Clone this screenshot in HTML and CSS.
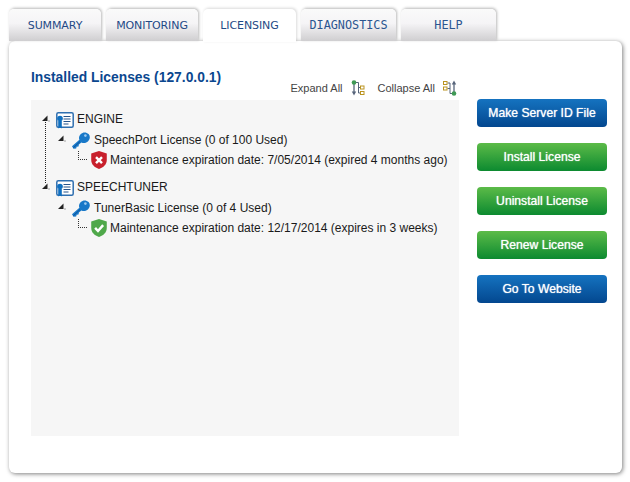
FILE: index.html
```html
<!DOCTYPE html>
<html lang="en">
<head>
<meta charset="utf-8">
<title>Licensing</title>
<link rel="stylesheet" href="styles.css">
</head>
<body>
<svg class="defs" width="0" height="0" aria-hidden="true">
  <defs>
    <symbol id="cert" viewBox="0 0 18 18">
      <rect x=".8" y=".8" width="16.400" height="14.400" rx="1.500" fill="#fff" stroke="#2f6fb0" stroke-width="1.500"/>
      <path d="M7.500 4.500h7M7.500 7h7M7.500 9.500h7M7.500 12h5" stroke="#26548c" stroke-width="1.200" fill="none"/>
      <circle cx="4" cy="6.500" r="2.800" fill="#0f6fc0"/>
      <path d="M2.200 9h3.600v7.500l-1.800-1.300-1.800 1.300z" fill="#0f6fc0"/>
    </symbol>
    <symbol id="key" viewBox="0 0 18 18">
      <path d="M0 15.300l1.500 2.500 2.700-.2.400-1.900 1.900-.2.400-1.900 2.500-2.200c2.200 1 5 .6 6.700-1.200 2.200-2.200 2.200-5.300.5-7.200C14.200 .8 10.800 1 8.800 3 7 4.800 6.600 7.100 7.400 8.800z" fill="#1878c8"/>
      <path d="M1.300 16.800L8 10.500" stroke="#0c4f94" stroke-width=".9"/>
      <circle cx="13.400" cy="4.600" r="1.300" fill="#9ccaf0"/>
    </symbol>
    <symbol id="tree-node" viewBox="0 0 8 8">
      <path d="M5.500 .5v5.500H0z" fill="#222"/>
      <path d="M6.500 5.500h1v1h-1z" fill="#555"/>
    </symbol>
    <symbol id="expand" viewBox="0 0 14 16">
      <path d="M3 4v9" stroke="#56647a" stroke-width="1.300" fill="none"/>
      <path d="M.8 11.500L3 15.500l2.200-4z" fill="#56647a"/>
      <path d="M5 2.500h2.500v10.500h2M7.500 7.500h2" stroke="#56647a" stroke-width="1" fill="none"/>
      <circle cx="3" cy="2.500" r="2.300" fill="#3f9a55"/>
      <rect x="9.500" y="6" width="3.500" height="3" fill="#fff" stroke="#bb9420"/>
      <rect x="9.500" y="11.500" width="3.500" height="3" fill="#fff" stroke="#bb9420"/>
    </symbol>
    <symbol id="collapse" viewBox="0 0 14 16">
      <path d="M11 3v9" stroke="#56647a" stroke-width="1.300" fill="none"/>
      <path d="M8.800 4.500L11 .5l2.200 4z" fill="#56647a"/>
      <path d="M4.500 3h2.500v10.500h2M4.500 8.500H7" stroke="#56647a" stroke-width="1" fill="none"/>
      <circle cx="11" cy="13.500" r="2.300" fill="#3f9a55"/>
      <rect x=".5" y="1.500" width="3.500" height="3" fill="#fff" stroke="#bb9420"/>
      <rect x=".5" y="7" width="3.500" height="3" fill="#fff" stroke="#bb9420"/>
    </symbol>
  </defs>
</svg>
<div class="app">
  <nav class="tabs">
    <a class="tab">SUMMARY</a>
    <a class="tab">MONITORING</a>
    <a class="tab active">LICENSING</a>
    <a class="tab mono tab-wide">DIAGNOSTICS</a>
    <a class="tab mono tab-wide">HELP</a>
  </nav>
  <main class="card">
    <section class="licenses">
      <header class="licenses-head">
        <h1>Installed Licenses (127.0.0.1)</h1>
        <div class="tree-actions">
          <span class="action">Expand All <svg class="action-icon"><use href="#expand"/></svg></span>
          <span class="action">Collapse All <svg class="action-icon"><use href="#collapse"/></svg></span>
        </div>
      </header>
      <div class="tree">
        <div class="branch">
          <div class="row level-0"><svg class="twist"><use href="#tree-node"/></svg><svg class="icon cert"><use href="#cert"/></svg><span>ENGINE</span></div>
          <div class="row level-1"><svg class="twist"><use href="#tree-node"/></svg><svg class="icon"><use href="#key"/></svg><span>SpeechPort License (0 of 100 Used)</span></div>
          <div class="row level-2"><span class="elbow"></span>
            <svg class="shield" viewBox="2 1 14 16.200"><path d="M9 1l7 2.200v6c0 4-3 6.800-7 8-4-1.200-7-4-7-8v-6z" fill="#c8202c"/><path d="M6.300 6.500l5.400 5.400M11.700 6.500l-5.400 5.400" stroke="#fff" stroke-width="2.200"/></svg>
            <span>Maintenance expiration date: 7/05/2014 (expired 4 months ago)</span></div>
        </div>
        <div class="branch">
          <div class="row level-0"><svg class="twist"><use href="#tree-node"/></svg><svg class="icon cert"><use href="#cert"/></svg><span>SPEECHTUNER</span></div>
          <div class="row level-1"><svg class="twist"><use href="#tree-node"/></svg><svg class="icon"><use href="#key"/></svg><span>TunerBasic License (0 of 4 Used)</span></div>
          <div class="row level-2"><span class="elbow"></span>
            <svg class="shield" viewBox="2 1 14 16.200"><path d="M9 1l7 2.200v6c0 4-3 6.800-7 8-4-1.200-7-4-7-8v-6z" fill="#4fa84a"/><path d="M5.500 9l2.600 2.800 4.600-5.300" stroke="#fff" stroke-width="2.200" fill="none"/></svg>
            <span>Maintenance expiration date: 12/17/2014 (expires in 3 weeks)</span></div>
        </div>
        <span class="root-line"></span>
      </div>
    </section>
    <aside class="buttons">
      <a class="btn blue">Make Server ID File</a>
      <a class="btn green">Install License</a>
      <a class="btn green">Uninstall License</a>
      <a class="btn green">Renew License</a>
      <a class="btn blue">Go To Website</a>
    </aside>
  </main>
</div>
</body>
</html>
```
FILE: styles.css
```css
* { box-sizing: border-box; }
html, body { margin: 0; height: 100%; background: #fff; }
body { font-family: "Liberation Sans", Arial, sans-serif; font-size: 12px; color: #222; overflow: hidden; }
.defs { position: absolute; }
.app { padding: 9px 8px 0 9px; width: 630px; }
.tabs { display: flex; gap: 5px; height: 32px; position: relative; z-index: 2; }
.tab {
  width: 92px; height: 32px; padding-top: 10px;
  border-radius: 5px 5px 0 0;
  background: linear-gradient(#fafafa 0%, #f5f4f6 45%, #cfced0 100%);
  box-shadow: 1px -1px 3px rgba(0,0,0,.28);
  color: #1f4a86; font-size: 11px; text-align: center;
  font-family: "DejaVu Sans", sans-serif; letter-spacing: -.1px;
}
.tab.active { background: #fff; width: 93px; height: 33px; box-shadow: 1px -1px 3px rgba(0,0,0,.15); }
.tab.mono { font-family: "DejaVu Sans Mono", monospace; font-size: 11.800px; letter-spacing: 0; color: #2b5590; padding-top: 9px; }
.tab-wide { width: 95px; }
.card {
  position: relative; z-index: 1;
  height: 432px; width: 613px;
  background: #fff; border-radius: 6px;
  box-shadow: 1px 1px 4px rgba(0,0,0,.5);
  display: flex; padding: 0 15px 0 22px; gap: 18px;
}
.licenses { width: 428px; display: flex; flex-direction: column; }
.licenses-head { height: 59px; position: relative; }
h1 { margin: 0; padding-top: 28px; font-size: 13.850px; line-height: 17px; color: #0b478f; font-weight: bold; }
.tree-actions { position: absolute; right: 2px; top: 38px; display: flex; gap: 13px; font-size: 11px; color: #444; }
.action { display: flex; align-items: center; gap: 8px; height: 17px; }
.action-icon { width: 14px; height: 16px; }
.tree { position: relative; flex: none; height: 336px; background: #f6f6f6; padding-top: 9px; }
.branch { height: 68px; }
.row { display: flex; align-items: center; height: 20px; position: relative; color: #1a1a1a; }
.row span:last-child { white-space: nowrap; }
.level-0 { padding-left: 11px; }
.level-1 { padding-left: 27px; height: 21px; }
.level-2 { padding-left: 60px; height: 20px; }
.twist { width: 8px; height: 8px; margin-right: 6px; margin-top: -1px; flex: none; }
.icon { width: 18px; height: 18px; margin-right: 4px; flex: none; }
.icon.cert { margin-right: 3px; margin-top: 3px; }
.shield { width: 16px; height: 18px; margin-right: 3px; flex: none; }
.elbow { position: absolute; left: 47px; top: 1px; width: 9px; height: 9px; border-left: 1px dotted #333; border-bottom: 1px dotted #333; }
.root-line { position: absolute; left: 14px; top: 20px; height: 63px; border-left: 1px dotted #222; }
.buttons { display: flex; flex-direction: column; gap: 16px; padding-top: 58px; width: 130px; }
.btn {
  height: 28px; border-radius: 4px; color: #fff; font-size: 12.150px; font-weight: normal;
  display: flex; align-items: center; justify-content: center;
  text-shadow: 0 0 1px rgba(255,255,255,.9);
}
.blue { background: linear-gradient(#1573c0, #03478f); }
.green { background: linear-gradient(#5cbb48, #0c8a30); }
```
